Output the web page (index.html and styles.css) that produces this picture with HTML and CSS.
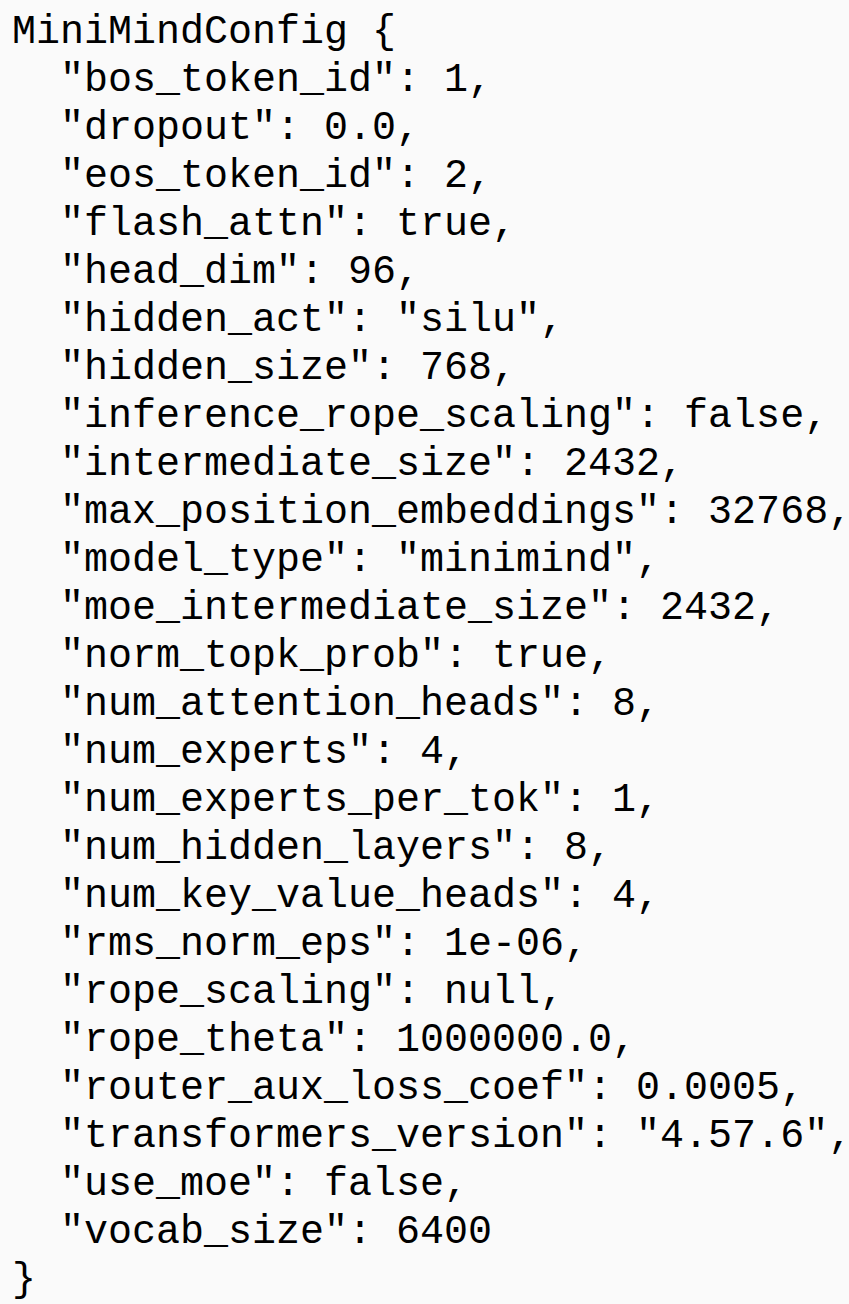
FILE: index.html
```html
<!DOCTYPE html>
<html>
<head>
<meta charset="utf-8">
<link rel="stylesheet" href="styles.css">
</head>
<body>
<pre class="config">MiniMindConfig {
  "bos_token_id": 1,
  "dropout": 0.0,
  "eos_token_id": 2,
  "flash_attn": true,
  "head_dim": 96,
  "hidden_act": "silu",
  "hidden_size": 768,
  "inference_rope_scaling": false,
  "intermediate_size": 2432,
  "max_position_embeddings": 32768,
  "model_type": "minimind",
  "moe_intermediate_size": 2432,
  "norm_topk_prob": true,
  "num_attention_heads": 8,
  "num_experts": 4,
  "num_experts_per_tok": 1,
  "num_hidden_layers": 8,
  "num_key_value_heads": 4,
  "rms_norm_eps": 1e-06,
  "rope_scaling": null,
  "rope_theta": 1000000.0,
  "router_aux_loss_coef": 0.0005,
  "transformers_version": "4.57.6",
  "use_moe": false,
  "vocab_size": 6400
}</pre>
</body>
</html>
```
FILE: styles.css
```css
html, body {
  margin: 0;
  padding: 0;
  background: #fafafa;
  overflow: hidden;
}
.config {
  margin: 0;
  padding: 9px 0 0 12px;
  font-family: "Liberation Mono", "DejaVu Sans Mono", monospace;
  font-size: 40px;
  line-height: 48px;
  color: #000;
  white-space: pre;
  overflow: hidden;
}
```
